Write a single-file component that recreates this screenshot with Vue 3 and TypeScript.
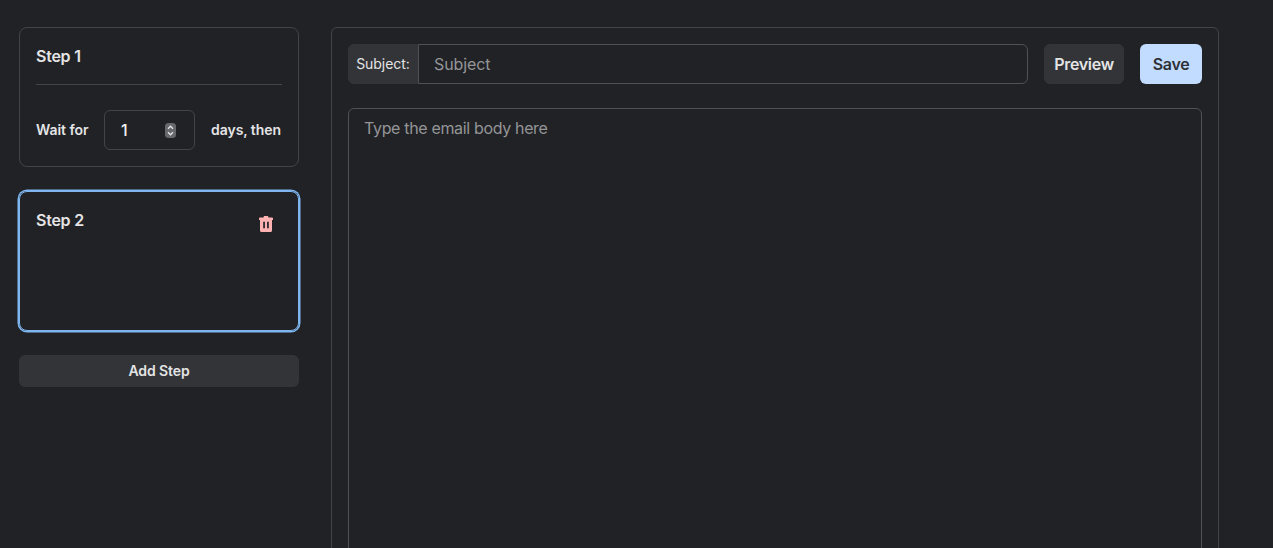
<script setup lang="ts">
const steps = [{ id: 1, title: 'Step 1' }]
</script>

<template>
  <div class="page">
    <aside class="side">
      <section v-for="s in steps" :key="s.id" class="card">
        <h3 class="title">{{ s.title }}</h3>
        <hr class="rule" />
        <div class="wait">
          <span class="lbl">Wait for</span>
          <div class="num">
            <input class="num-input" type="text" value="1" />
            <span class="spin">
              <svg width="11" height="15" viewBox="0 0 11 15">
                <rect width="11" height="15" rx="3.5" fill="#67686b" />
                <path d="M3 5.7 5.500 3.200 8 5.700M3 9.300 5.500 11.800 8 9.300" fill="none" stroke="#e6e6e7" stroke-width="1.3" />
              </svg>
            </span>
          </div>
          <span class="lbl">days, then</span>
        </div>
      </section>
      <section class="card active">
        <h3 class="title">Step 2</h3>
        <svg class="trash" width="14" height="16" viewBox="0 0 14 16">
          <path fill="#feb2b2" fill-rule="evenodd" d="M5 0h4l.5 1.500H13a1 1 0 0 1 1 1V4h-1v10.500a1.500 1.500 0 0 1-1.500 1.500h-9A1.500 1.500 0 0 1 1 14.500V4H0V2.500a1 1 0 0 1 1-1h3.500zM4.200 5.700v6.600h1.700V5.700zM8.100 5.700v6.600h1.700V5.700z" />
        </svg>
      </section>
      <button class="add">Add Step</button>
    </aside>
    <main class="panel">
      <div class="top">
        <div class="group">
          <span class="addon">Subject:</span>
          <input class="subject" type="text" placeholder="Subject" />
        </div>
        <button class="btn">Preview</button>
        <button class="btn save">Save</button>
      </div>
      <textarea class="body-input" placeholder="Type the email body here"></textarea>
    </main>
  </div>
</template>

<style>
html, body { margin: 0; background: #212226; overflow: hidden; }
</style>

<style scoped>
.page {
  display: flex;
  align-items: flex-start;
  gap: 32px;
  padding: 27px 54px 0 19px;
  height: 548px;
  box-sizing: border-box;
  background: #212226;
  color: #e4e4e5;
  font-family: Inter, "Liberation Sans", sans-serif;
  overflow: hidden;
}
.side {
  width: 280px;
  flex: none;
  display: flex;
  flex-direction: column;
  gap: 24px;
}
.card {
  position: relative;
  height: 140px;
  box-sizing: border-box;
  padding: 16px;
  border: 1px solid #434448;
  border-radius: 8px;
}
.card.active {
  border: 1px solid #7fb6f0;
  box-shadow: 0 0 0 1.5px #7fb6f0;
}
.title {
  margin: 0;
  font-size: 16px;
  line-height: 24px;
  font-weight: 600;
  letter-spacing: -0.25px;
}
.rule {
  margin: 16px 0 25px;
  border: 0;
  border-top: 1px solid #434448;
}
.wait {
  display: grid;
  grid-template-columns: 52px 91px 1fr;
  align-items: center;
  column-gap: 16px;
}
.lbl {
  padding-bottom: 1px;
  font-size: 14px;
  font-weight: 600;
  white-space: nowrap;
  letter-spacing: -0.05px;
}
.num {
  position: relative;
  width: 91px;
  height: 40px;
  flex: none;
}
.num-input {
  width: 100%;
  height: 100%;
  box-sizing: border-box;
  padding: 0 16px;
  background: transparent;
  border: 1px solid #434448;
  border-radius: 6px;
  color: #f0f0f0;
  font: 500 16px Inter, sans-serif;
  outline: none;
}
.spin {
  position: absolute;
  right: 19px;
  top: 13px;
  line-height: 0;
}
.trash {
  position: absolute;
  top: 24px;
  right: 25px;
}
.add {
  height: 32px;
  padding: 0 0 1px;
  border: 0;
  border-radius: 6px;
  background: #323438;
  color: #e4e4e5;
  font: 600 14px Inter, sans-serif;
  letter-spacing: -0.1px;
}
.panel {
  flex: 1;
  min-width: 0;
  height: 700px;
  box-sizing: border-box;
  padding: 16px;
  display: flex;
  flex-direction: column;
  gap: 24px;
  border: 1px solid #434448;
  border-radius: 6px;
}
.top {
  display: flex;
  gap: 16px;
  height: 40px;
  flex: none;
}
.group {
  flex: 1;
  display: flex;
  min-width: 0;
}
.addon {
  width: 70px;
  box-sizing: border-box;
  display: flex;
  align-items: center;
  justify-content: center;
  padding-bottom: 1px;
  background: #323438;
  font-size: 14px;
  letter-spacing: -0.05px;
  border-radius: 6px 0 0 6px;
}
.subject {
  flex: 1;
  min-width: 0;
  box-sizing: border-box;
  padding: 0 15px;
  background: transparent;
  border: 1px solid #505154;
  border-radius: 0 6px 6px 0;
  color: #e4e4e5;
  font: 400 16px Inter, sans-serif;
  letter-spacing: -0.1px;
  outline: none;
}
.subject::placeholder, .body-input::placeholder {
  color: #949597;
  opacity: 1;
}
.btn {
  height: 40px;
  width: 80px;
  padding: 0;
  border: 0;
  border-radius: 6px;
  background: #323438;
  color: #e4e4e5;
  font: 600 16px Inter, sans-serif;
  letter-spacing: -0.3px;
}
.btn.save {
  width: 62px;
  background: #c2dcff;
  color: #2e3036;
}
.body-input {
  flex: 1;
  display: block;
  box-sizing: border-box;
  padding: 7px 15px;
  background: transparent;
  border: 1px solid #505154;
  border-radius: 6px;
  color: #e4e4e5;
  font: 400 16px/24px Inter, sans-serif;
  letter-spacing: -0.34px;
  outline: none;
  resize: none;
}
</style>
